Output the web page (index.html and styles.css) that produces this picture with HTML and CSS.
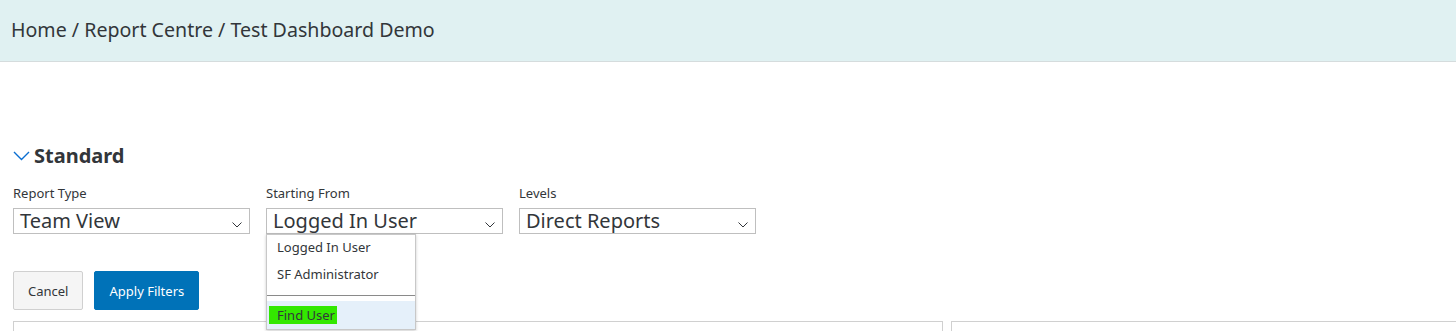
FILE: index.html
```html
<!DOCTYPE html>
<html lang="en">
<head>
    <meta charset="UTF-8">
    <title>Test Dashboard Demo</title>
    <link rel="stylesheet" href="styles.css">
</head>
<body>
    <div class="header">
        <div class="breadcrumb">Home / Report Centre / Test Dashboard Demo</div>
    </div>

    <div class="content">
        <div class="section-title">
            <svg class="chevron" width="17" height="10" viewBox="0 0 17 10">
                <path d="M1 1 L8.5 8.5 L16 1" fill="none" stroke="#0a6ed1" stroke-width="1.4"/>
            </svg>
            <span>Standard</span>
        </div>

        <div class="filters">
            <div class="field">
                <label>Report Type</label>
                <div class="select">
                    <span>Team View</span>
                    <svg class="arrow" width="10" height="6" viewBox="0 0 10 6"><path d="M0.5 0.5 L5 5 L9.5 0.5" fill="none" stroke="#32363a" stroke-width="1"/></svg>
                </div>
            </div>
            <div class="field">
                <label>Starting From</label>
                <div class="select">
                    <span>Logged In User</span>
                    <svg class="arrow" width="10" height="6" viewBox="0 0 10 6"><path d="M0.5 0.5 L5 5 L9.5 0.5" fill="none" stroke="#32363a" stroke-width="1"/></svg>
                    <ul class="dropdown">
                        <li>Logged In User</li>
                        <li>SF Administrator</li>
                        <li class="divider"></li>
                        <li class="active"><span class="mark">Find User</span></li>
                    </ul>
                </div>
            </div>
            <div class="field">
                <label>Levels</label>
                <div class="select">
                    <span>Direct Reports</span>
                    <svg class="arrow" width="10" height="6" viewBox="0 0 10 6"><path d="M0.5 0.5 L5 5 L9.5 0.5" fill="none" stroke="#32363a" stroke-width="1"/></svg>
                </div>
            </div>
        </div>

        <div class="actions">
            <button class="btn">Cancel</button>
            <button class="btn btn-primary">Apply Filters</button>
        </div>

        <div class="panels">
            <div class="panel"></div>
            <div class="panel"></div>
        </div>
    </div>
</body>
</html>
```

FILE: styles.css
```css
html {
    overflow: hidden;
}
body {
    margin: 0;
    font-family: "Noto Sans", Arial, sans-serif;
    color: #32363a;
    background-color: white;
}
.header {
    height: 61px;
    background-color: #e0f1f2;
    border-bottom: 1px solid #d5dcdd;
    display: flex;
    align-items: center;
    padding-left: 11px;
}
.breadcrumb {
    font-size: 19.6px;
    color: #32363a;
    margin-top: -3px;
}
.content {
    padding: 0 0 0 13px;
}
.section-title {
    display: flex;
    align-items: center;
    margin-top: 80px;
    height: 26px;
    font-size: 20px;
    font-weight: bold;
}
.section-title .chevron {
    margin-right: 4px;
    margin-top: 1px;
}
.filters {
    display: flex;
    gap: 16px;
    margin-top: 16px;
}
.field label {
    display: block;
    font-size: 13px;
    line-height: 18px;
    margin-bottom: 6px;
}
.select {
    position: relative;
    width: 237px;
    height: 26px;
    box-sizing: border-box;
    border: 1px solid #bfbfbf;
    font-size: 20px;
    line-height: 24px;
    padding-left: 6px;
}
.select .arrow {
    position: absolute;
    right: 7px;
    top: 13px;
}
.dropdown {
    position: absolute;
    top: 25px;
    left: -1px;
    width: 148px;
    margin: 0;
    padding: 0;
    list-style: none;
    background-color: white;
    border: 1px solid #c8c8c8;
    box-shadow: 0 1px 3px rgba(0,0,0,0.2);
    font-size: 13px;
    line-height: 18px;
    z-index: 2;
}
.dropdown li {
    padding: 4px 10px 5px 10px;
}
.dropdown li:first-child {
    padding-top: 3px;
}
.dropdown li.divider {
    padding: 0;
    height: 7px;
    border-bottom: 1px solid #8a8a8a;
    margin-bottom: 5px;
}
.dropdown li.active {
    background-color: #e5f0fa;
    padding: 5px 0 5px 2px;
}
.mark {
    display: inline-block;
    background-color: #33e800;
    padding: 0 2px 0 8px;
    line-height: 18px;
}
.actions {
    display: flex;
    gap: 11px;
    margin-top: 37px;
}
.btn {
    font-family: "Noto Sans", Arial, sans-serif;
    font-size: 13px;
    height: 39px;
    padding: 0 14px;
    border: 1px solid #d0d0d0;
    border-radius: 2px;
    background-color: #f5f5f5;
    color: #32363a;
    cursor: pointer;
}
.btn-primary {
    background-color: #0072b8;
    border-color: #0072b8;
    color: white;
    padding: 0 14px;
}
.panels {
    display: grid;
    grid-template-columns: 930px 560px;
    gap: 8px;
    margin-top: 11px;
}
.panel {
    height: 200px;
    border: 1px solid #d0d0d0;
}
```
